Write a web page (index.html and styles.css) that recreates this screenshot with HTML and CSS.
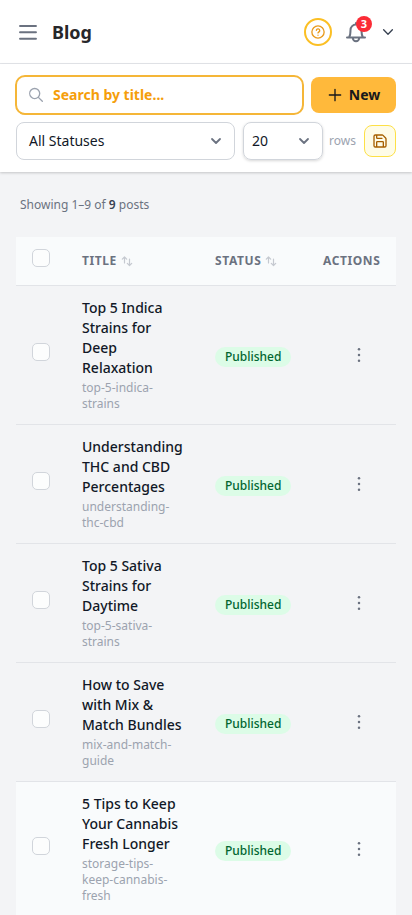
FILE: index.html
```html
<!DOCTYPE html>
<html lang="en">
<head>
<meta charset="utf-8">
<meta name="viewport" content="width=device-width, initial-scale=1">
<title>Blog</title>
<link rel="stylesheet" href="styles.css">
</head>
<body>
<svg class="defs" width="0" height="0" aria-hidden="true">
  <symbol id="chevron" viewBox="0 0 24 24"><path d="m19.5 8.25-7.5 7.5-7.5-7.5"/></symbol>
  <symbol id="caret" viewBox="0 0 20 20"><path d="m6 8 4 4 4-4"/></symbol>
  <symbol id="sort" viewBox="0 0 12 12"><path d="M3.500 8V2M1.300 4.200 3.500 2l2.200 2.200M8.500 4v6.500M6.300 8.300l2.200 2.200 2.200-2.200"/></symbol>
  <symbol id="dots" viewBox="0 0 20 20"><circle cx="10" cy="4.200" r="1.250"/><circle cx="10" cy="10" r="1.250"/><circle cx="10" cy="15.800" r="1.250"/></symbol>
</svg>
<header class="topbar">
  <svg class="menu" viewBox="0 0 24 24"><path d="M4 6h16M4 12.300h16M4 18.700h16"/></svg>
  <h1>Blog</h1>
  <button class="help" aria-label="Help"><svg viewBox="0 0 24 24"><path d="M9.500 9.300a2.600 2.600 0 0 1 5.100.8c0 1.700-2.600 2.300-2.600 3.300M21.200 12a9.200 9.200 0 1 1-18.400 0 9.200 9.200 0 0 1 18.400 0ZM12 16.800h.01"/></svg></button>
  <div class="bell">
    <svg viewBox="0 0 24 24"><path d="M3 17.500h18M5.200 17c1-1.500 1.300-3.500 1.300-7a5.500 5.500 0 0 1 11 0c0 3.500.3 5.500 1.300 7M12 4.500V3M8.800 18a3.200 3.200 0 0 0 6.400 0"/></svg>
    <span class="count">3</span>
  </div>
  <svg class="account" viewBox="0 0 24 24"><use href="#chevron"/></svg>
</header>
<section class="toolbar">
  <div class="line">
    <label class="search">
      <svg viewBox="0 0 24 24"><path d="m21.500 21.500-6.300-6.300m0 0A7.500 7.500 0 1 0 4.600 4.600a7.500 7.500 0 0 0 10.600 10.600Z"/></svg>
      <input type="text" placeholder="Search by title...">
    </label>
    <button class="new"><svg viewBox="0 0 24 24"><path d="M12 3.500v17m8.500-8.500h-17"/></svg>New</button>
  </div>
  <div class="line filters">
    <div class="select status-filter"><span>All Statuses</span><svg><use href="#caret"/></svg></div>
    <div class="select page-size"><span>20</span><svg><use href="#caret"/></svg></div>
    <span class="rows">rows</span>
    <button class="save" aria-label="Save"><svg viewBox="0 0 24 24"><path d="M15.200 3a2 2 0 0 1 1.400.6l3.800 3.800a2 2 0 0 1 .6 1.400V19a2 2 0 0 1-2 2H5a2 2 0 0 1-2-2V5a2 2 0 0 1 2-2zM17 21v-7a1 1 0 0 0-1-1H8a1 1 0 0 0-1 1v7M7 3v4a1 1 0 0 0 1 1h7"/></svg></button>
  </div>
</section>
<main>
  <p class="summary">Showing 1–9 of <b>9</b> posts</p>
  <div class="table">
    <div class="row head">
      <span class="check"></span>
      <span class="label">TITLE <svg><use href="#sort"/></svg></span>
      <span class="label">STATUS <svg><use href="#sort"/></svg></span>
      <span class="label actions">ACTIONS</span>
    </div>
    <div class="row">
      <span class="check"></span>
      <div class="post"><h2>Top 5 Indica Strains for Deep Relaxation</h2><p>top-5-indica-strains</p></div>
      <span class="pill">Published</span>
      <svg class="more"><use href="#dots"/></svg>
    </div>
    <div class="row">
      <span class="check"></span>
      <div class="post"><h2>Understanding THC and CBD Percentages</h2><p>understanding-thc-cbd</p></div>
      <span class="pill">Published</span>
      <svg class="more"><use href="#dots"/></svg>
    </div>
    <div class="row">
      <span class="check"></span>
      <div class="post"><h2>Top 5 Sativa Strains for Daytime</h2><p>top-5-sativa-strains</p></div>
      <span class="pill">Published</span>
      <svg class="more"><use href="#dots"/></svg>
    </div>
    <div class="row">
      <span class="check"></span>
      <div class="post"><h2>How to Save with Mix &amp; Match Bundles</h2><p>mix-and-match-guide</p></div>
      <span class="pill">Published</span>
      <svg class="more"><use href="#dots"/></svg>
    </div>
    <div class="row hovered">
      <span class="check"></span>
      <div class="post"><h2>5 Tips to Keep Your Cannabis Fresh Longer</h2><p>storage-tips-keep-cannabis-fresh</p></div>
      <span class="pill">Published</span>
      <svg class="more"><use href="#dots"/></svg>
    </div>
  </div>
</main>
</body>
</html>
```
FILE: styles.css
```css
* { box-sizing: border-box; }
body {
  margin: 0;
  height: 915px;
  overflow: hidden;
  background: #f3f4f6;
  color: #111827;
  font: 14px/20px "Noto Sans", sans-serif;
}
h1, h2, p { margin: 0; }
button, input { font: inherit; padding: 0; }
button { display: flex; align-items: center; justify-content: center; }
svg { display: block; flex: none; fill: none; stroke: currentColor; stroke-width: 1.5; stroke-linecap: round; stroke-linejoin: round; }
.defs { position: absolute; }

.topbar {
  display: flex;
  align-items: center;
  height: 64px;
  padding: 0 16px;
  background: #fff;
  border-bottom: 1px solid #e5e7eb;
}
.menu { width: 24px; height: 24px; margin-top: 1px; color: #6b7280; stroke-width: 1.9; }
h1 { margin: 1px auto 0 12px; font-size: 18px; line-height: 28px; font-weight: 700; color: #27272a; }
.help { width: 28px; height: 28px; border: 2px solid #fbbf24; border-radius: 50%; background: #fff; color: #e99a1c; }
.help svg { width: 16px; height: 16px; stroke-width: 2; }
.bell { position: relative; margin-left: 12px; color: #6b7280; }
.bell svg { width: 24px; height: 24px; stroke-width: 2; }
.count {
  position: absolute;
  top: -4px;
  right: -4px;
  width: 16px;
  height: 16px;
  border-radius: 50%;
  background: #fb2c36;
  color: #fff;
  font-size: 11px;
  line-height: 16px;
  font-weight: 700;
  text-align: center;
}
.account { width: 14px; height: 14px; margin-left: 13px; margin-right: 1px; color: #374151; stroke-width: 2.3; }

.toolbar {
  padding: 11px 16px 12px 15px;
  background: #fff;
  box-shadow: 0 1px 3px rgba(0, 0, 0, .12), 0 1px 2px rgba(0, 0, 0, .08);
}
.line { display: flex; align-items: center; gap: 7px; }
.search {
  display: flex;
  align-items: center;
  flex: 1;
  height: 40px;
  padding: 0 12px 0 11px;
  border: 2px solid #f5b638;
  border-radius: 10px;
  background: #fff;
  color: #9ca3af;
}
.search svg { width: 16px; height: 16px; stroke-width: 2; }
.search input { width: 200px; margin-left: 9px; border: 0; outline: 0; background: none; font-weight: 700; }
.search input::placeholder { color: #f59e0b; opacity: 1; }
.new { width: 85px; height: 36px; gap: 6px; border: 0; border-radius: 8px; background: #ffb93b; color: #18181b; font-weight: 700; }
.new svg { width: 16px; height: 16px; stroke-width: 2; }
.filters { gap: 0; margin: 7px 0 0 1px; }
.select {
  display: flex;
  align-items: center;
  justify-content: space-between;
  height: 38px;
  padding: 0 8px 0 12px;
  border: 1px solid #d1d5db;
  border-radius: 8px;
  color: #111827;
}
.select svg { width: 20px; height: 20px; color: #6b7280; stroke-width: 1.8; }
.status-filter { width: 219px; }
.page-size { width: 80px; margin-left: 8px; padding-left: 8px; box-shadow: 0 1px 3px rgba(0, 0, 0, .16); }
.rows { margin: 0 auto 0 6px; font-size: 12px; color: #9ca3af; }
.save { width: 32px; height: 32px; border: 1px solid #fde047; border-radius: 8px; background: #fefce8; color: #a65f00; }
.save svg { width: 16px; height: 16px; stroke-width: 2; }

main { padding: 23px 16px 0; }
.summary { padding-left: 4px; font-size: 12px; color: #6b7280; }
.summary b { font-weight: 600; color: #374151; }
.table { margin-top: 22px; }
.row {
  display: grid;
  grid-template-columns: 50px 133px 108px 57px;
  align-items: center;
  padding: 12px 16px;
  border-bottom: 1px solid #e2e4e8;
}
.head, .hovered { background: #f9fbfc; }
.head { height: 49px; padding-block: 0; }
.check { width: 18px; height: 18px; margin-bottom: 6px; border: 1px solid #d1d5db; border-radius: 5px; background: #fcfdfd; }
.label { display: flex; align-items: center; gap: 4px; font-size: 12px; line-height: 16px; font-weight: 700; letter-spacing: .6px; color: #6b7280; }
.label svg { width: 12px; height: 12px; color: #c5c9d0; stroke-width: 1.2; }
.post { width: 101px; }
.post h2 { font-size: 14px; line-height: 20px; font-weight: 500; }
.post p { margin-top: 2px; font-size: 12px; line-height: 16px; color: #9ca3af; }
.pill { justify-self: start; margin-top: 3px; padding: 2px 10px; border-radius: 10px; background: #dcfce7; color: #016630; font-size: 12px; line-height: 16px; font-weight: 500; }
.more { width: 20px; height: 20px; margin-left: 26px; fill: #6b7280; stroke: none; }
```
